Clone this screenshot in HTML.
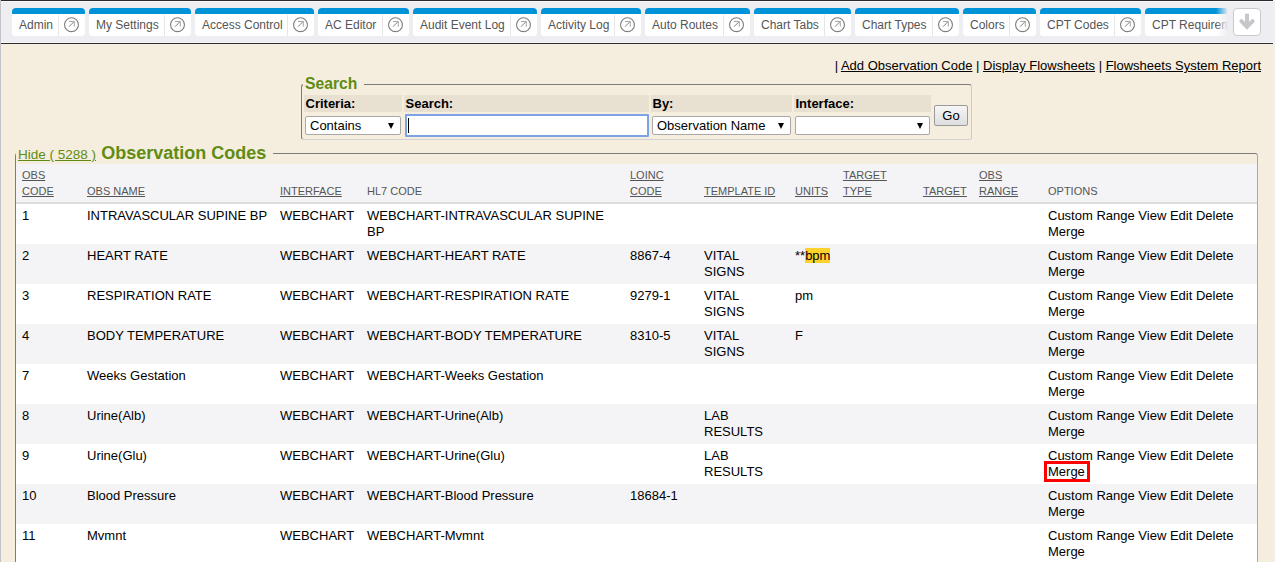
<!DOCTYPE html>
<html><head><meta charset="utf-8">
<style>
*{box-sizing:border-box}
html,body{margin:0;padding:0}
body{width:1275px;height:562px;overflow:hidden;position:relative;background:#f5eddd;font-family:"Liberation Sans",sans-serif;font-size:13px;color:#000}
.lb{position:absolute;left:0;top:0;width:1px;height:562px;background:#c4c4c8;z-index:5}
.rb{position:absolute;left:1273px;top:0;width:2px;height:562px;background:#f0f0f0;z-index:5}
.bar{position:absolute;left:0;top:0;width:1273px;height:44px;background:#ededf2;border-top:1px solid #2a2a2a;border-bottom:1px solid #2e2e2e;overflow:hidden}
.bar .hl{position:absolute;left:0;top:0;width:100%;height:1px;background:#f8f8fa}
.bar .hl2{position:absolute;left:0;top:41px;width:100%;height:1px;background:#f8f8fa}
.tabs{position:absolute;left:12px;top:7px;width:1216px;height:30px;overflow:hidden;display:flex;gap:4px;white-space:nowrap}
.tab{position:relative;flex:none;display:flex;height:28px;background:#fff;border-top:6px solid #0093d7;border-radius:4px 4px 3px 3px}
.tab .t{display:block;padding:0 5px 0 7px;font-size:12px;color:#555;line-height:22px}
.tab .sep{display:block;width:1px;margin-top:1px;background:#e6e6e6}
.tab .ic{display:block;width:26px;height:22px}
.tab svg{display:block}
.fade{position:absolute;left:1216px;top:6px;width:12px;height:31px;background:linear-gradient(to right,rgba(237,237,242,0),#ededf2)}
.fade2{position:absolute;left:1227px;top:6px;width:6px;height:31px;background:#ededf2}
.dbtn{position:absolute;left:1233px;top:7px;width:28px;height:28px;background:#fff;border:1px solid #c9c9cd;border-radius:4px}
.dbtn svg{display:block}
.links{position:absolute;right:14px;top:58px;font-size:13px;line-height:16px;color:#000;white-space:nowrap}
.links u{text-decoration:underline}
.fs{position:absolute;border:1px solid #7c7c7c;border-right-color:#cacaca;border-bottom-color:#d2d2d2;border-radius:3px}
.legend{position:absolute;background:#f5eddd;white-space:nowrap}
.green{color:#608c14}
.hc{position:absolute;background:#e8e1d1;font-weight:bold;font-size:13px;line-height:17px;padding-left:1.5px;height:17px}
.sel{position:absolute;background:#fff;border:1px solid #a9a9a9;border-radius:2px;height:19px;font-size:13px;line-height:17px;padding-left:4px;white-space:nowrap}
.sel .ar{position:absolute;right:6px;top:6px;width:0;height:0;border-left:3px solid transparent;border-right:3px solid transparent;border-top:6px solid #000}
.inp{position:absolute;left:405px;top:114px;width:244px;height:23px;background:#fff;border:2px solid #7da2e6;border-radius:1px}
.inp .caret{position:absolute;left:0.5px;top:2px;width:1px;height:15px;background:#000}
.go{position:absolute;left:934px;top:105px;width:34px;height:21px;border:1px solid #9a9a9a;border-radius:2px;background:linear-gradient(#f6f6f6,#dedede);font-size:13px;line-height:19px;text-align:center}
table.dt{position:absolute;left:16px;top:164px;width:1241px;border-collapse:separate;border-spacing:0;table-layout:fixed}
.dt th{background:#f4f4f6;font-weight:normal;font-size:11px;color:#555;text-align:left;vertical-align:bottom;line-height:16px;padding:3px 0 3px 7px;height:40px;border-bottom:2px solid #dcdcdc}
.dt th u{text-decoration:underline}
.dt td{font-size:13px;line-height:16px;vertical-align:top;padding:4px 0 0 7px;height:40px;color:#000;white-space:nowrap}
.dt td:first-child,.dt th:first-child{padding-left:6px}
.dt tr.o td{background:#f4f4f6}
.dt tr.e td{background:#fff}
.hlt{background:#ffd22e}
.red{position:absolute;left:1044px;top:461px;width:46px;height:21px;border:3px solid #f00}
</style></head><body>
<div class="bar">
  <div class="hl"></div>
  <div class="tabs"><div class="tab"><span class="t" style="width:46px">Admin</span><span class="sep"></span><span class="ic"><svg width="26" height="22" viewBox="0 0 26 22"><circle cx="12.5" cy="10.7" r="6.95" fill="none" stroke="#7e7e7e" stroke-width="1.1"/><path d="M10 12.7 L15 7.7" fill="none" stroke="#808080" stroke-width="1"/><path d="M9.9 7.4 H15.3 V12.7" fill="none" stroke="#a4a4a4" stroke-width="1"/></svg></span></div><div class="tab"><span class="t" style="width:75px">My Settings</span><span class="sep"></span><span class="ic"><svg width="26" height="22" viewBox="0 0 26 22"><circle cx="12.5" cy="10.7" r="6.95" fill="none" stroke="#7e7e7e" stroke-width="1.1"/><path d="M10 12.7 L15 7.7" fill="none" stroke="#808080" stroke-width="1"/><path d="M9.9 7.4 H15.3 V12.7" fill="none" stroke="#a4a4a4" stroke-width="1"/></svg></span></div><div class="tab"><span class="t" style="width:92px">Access Control</span><span class="sep"></span><span class="ic"><svg width="26" height="22" viewBox="0 0 26 22"><circle cx="12.5" cy="10.7" r="6.95" fill="none" stroke="#7e7e7e" stroke-width="1.1"/><path d="M10 12.7 L15 7.7" fill="none" stroke="#808080" stroke-width="1"/><path d="M9.9 7.4 H15.3 V12.7" fill="none" stroke="#a4a4a4" stroke-width="1"/></svg></span></div><div class="tab"><span class="t" style="width:64px">AC Editor</span><span class="sep"></span><span class="ic"><svg width="26" height="22" viewBox="0 0 26 22"><circle cx="12.5" cy="10.7" r="6.95" fill="none" stroke="#7e7e7e" stroke-width="1.1"/><path d="M10 12.7 L15 7.7" fill="none" stroke="#808080" stroke-width="1"/><path d="M9.9 7.4 H15.3 V12.7" fill="none" stroke="#a4a4a4" stroke-width="1"/></svg></span></div><div class="tab"><span class="t" style="width:97px">Audit Event Log</span><span class="sep"></span><span class="ic"><svg width="26" height="22" viewBox="0 0 26 22"><circle cx="12.5" cy="10.7" r="6.95" fill="none" stroke="#7e7e7e" stroke-width="1.1"/><path d="M10 12.7 L15 7.7" fill="none" stroke="#808080" stroke-width="1"/><path d="M9.9 7.4 H15.3 V12.7" fill="none" stroke="#a4a4a4" stroke-width="1"/></svg></span></div><div class="tab"><span class="t" style="width:73px">Activity Log</span><span class="sep"></span><span class="ic"><svg width="26" height="22" viewBox="0 0 26 22"><circle cx="12.5" cy="10.7" r="6.95" fill="none" stroke="#7e7e7e" stroke-width="1.1"/><path d="M10 12.7 L15 7.7" fill="none" stroke="#808080" stroke-width="1"/><path d="M9.9 7.4 H15.3 V12.7" fill="none" stroke="#a4a4a4" stroke-width="1"/></svg></span></div><div class="tab"><span class="t" style="width:78px">Auto Routes</span><span class="sep"></span><span class="ic"><svg width="26" height="22" viewBox="0 0 26 22"><circle cx="12.5" cy="10.7" r="6.95" fill="none" stroke="#7e7e7e" stroke-width="1.1"/><path d="M10 12.7 L15 7.7" fill="none" stroke="#808080" stroke-width="1"/><path d="M9.9 7.4 H15.3 V12.7" fill="none" stroke="#a4a4a4" stroke-width="1"/></svg></span></div><div class="tab"><span class="t" style="width:70px">Chart Tabs</span><span class="sep"></span><span class="ic"><svg width="26" height="22" viewBox="0 0 26 22"><circle cx="12.5" cy="10.7" r="6.95" fill="none" stroke="#7e7e7e" stroke-width="1.1"/><path d="M10 12.7 L15 7.7" fill="none" stroke="#808080" stroke-width="1"/><path d="M9.9 7.4 H15.3 V12.7" fill="none" stroke="#a4a4a4" stroke-width="1"/></svg></span></div><div class="tab"><span class="t" style="width:77px">Chart Types</span><span class="sep"></span><span class="ic"><svg width="26" height="22" viewBox="0 0 26 22"><circle cx="12.5" cy="10.7" r="6.95" fill="none" stroke="#7e7e7e" stroke-width="1.1"/><path d="M10 12.7 L15 7.7" fill="none" stroke="#808080" stroke-width="1"/><path d="M9.9 7.4 H15.3 V12.7" fill="none" stroke="#a4a4a4" stroke-width="1"/></svg></span></div><div class="tab"><span class="t" style="width:46px">Colors</span><span class="sep"></span><span class="ic"><svg width="26" height="22" viewBox="0 0 26 22"><circle cx="12.5" cy="10.7" r="6.95" fill="none" stroke="#7e7e7e" stroke-width="1.1"/><path d="M10 12.7 L15 7.7" fill="none" stroke="#808080" stroke-width="1"/><path d="M9.9 7.4 H15.3 V12.7" fill="none" stroke="#a4a4a4" stroke-width="1"/></svg></span></div><div class="tab"><span class="t" style="width:74px">CPT Codes</span><span class="sep"></span><span class="ic"><svg width="26" height="22" viewBox="0 0 26 22"><circle cx="12.5" cy="10.7" r="6.95" fill="none" stroke="#7e7e7e" stroke-width="1.1"/><path d="M10 12.7 L15 7.7" fill="none" stroke="#808080" stroke-width="1"/><path d="M9.9 7.4 H15.3 V12.7" fill="none" stroke="#a4a4a4" stroke-width="1"/></svg></span></div><div class="tab last"><span class="t">CPT Requirements</span></div></div>
  <div class="hl2"></div>
  <div class="fade"></div><div class="fade2"></div>
  <div class="dbtn"><svg width="26" height="26" viewBox="0 0 26 26"><path d="M13 4.7 V18.5" fill="none" stroke="#c7c7cb" stroke-width="4"/><path d="M7.4 12.2 L13 17.8 L18.6 12.2" fill="none" stroke="#c7c7cb" stroke-width="4" stroke-linecap="round" stroke-linejoin="miter"/></svg></div>
</div>
<div class="lb"></div><div class="rb"></div>

<div class="links">| <u>Add Observation Code</u> | <u>Display Flowsheets</u> | <u>Flowsheets System Report</u></div>

<!-- Search fieldset -->
<div class="fs" style="left:301px;top:84px;width:671px;height:56px"></div>
<div class="legend green" style="left:303px;top:74px;padding:0 7px 0 2px;font-size:15.7px;font-weight:bold;line-height:19px">Search</div>
<div class="hc" style="left:304px;top:95px;width:98px">Criteria:</div>
<div class="hc" style="left:404px;top:95px;width:245px">Search:</div>
<div class="hc" style="left:651px;top:95px;width:141px">By:</div>
<div class="hc" style="left:794px;top:95px;width:137px">Interface:</div>
<div class="sel" style="left:305px;top:116px;width:96px">Contains<span class="ar"></span></div>
<div class="inp"><div class="caret"></div></div>
<div class="sel" style="left:652px;top:116px;width:139px">Observation Name<span class="ar"></span></div>
<div class="sel" style="left:795px;top:116px;width:135px"><span class="ar"></span></div>
<div class="go">Go</div>

<!-- Observation codes fieldset -->
<div class="fs" style="left:15px;top:153px;width:1243px;height:420px;border-right-color:#a8a8a8"></div>
<div class="legend" style="left:16px;top:142px;padding:0 7px 0 2px;line-height:22px"><span class="green" style="font-size:13.5px;text-decoration:underline">Hide ( 5288 )</span> <span class="green" style="font-size:18px;font-weight:bold;margin-left:1.5px">Observation Codes</span></div>

<table class="dt">
<colgroup>
<col style="width:64px"><col style="width:193px"><col style="width:87px"><col style="width:263px"><col style="width:74px"><col style="width:91px"><col style="width:48px"><col style="width:80px"><col style="width:56px"><col style="width:69px"><col>
</colgroup>
<tr><th><u>OBS</u><br><u>CODE</u></th><th><u>OBS NAME</u></th><th><u>INTERFACE</u></th><th>HL7 CODE</th><th><u>LOINC</u><br><u>CODE</u></th><th><u>TEMPLATE ID</u></th><th><u>UNITS</u></th><th><u>TARGET</u><br><u>TYPE</u></th><th><u>TARGET</u></th><th><u>OBS</u><br><u>RANGE</u></th><th>OPTIONS</th></tr>
<tr class="e"><td>1</td><td>INTRAVASCULAR SUPINE BP</td><td>WEBCHART</td><td>WEBCHART-INTRAVASCULAR SUPINE<br>BP</td><td></td><td></td><td></td><td></td><td></td><td></td><td>Custom Range View Edit Delete<br>Merge</td></tr>
<tr class="o"><td>2</td><td>HEART RATE</td><td>WEBCHART</td><td>WEBCHART-HEART RATE</td><td>8867-4</td><td>VITAL<br>SIGNS</td><td>**<span class="hlt">bpm</span></td><td></td><td></td><td></td><td>Custom Range View Edit Delete<br>Merge</td></tr>
<tr class="e"><td>3</td><td>RESPIRATION RATE</td><td>WEBCHART</td><td>WEBCHART-RESPIRATION RATE</td><td>9279-1</td><td>VITAL<br>SIGNS</td><td>pm</td><td></td><td></td><td></td><td>Custom Range View Edit Delete<br>Merge</td></tr>
<tr class="o"><td>4</td><td>BODY TEMPERATURE</td><td>WEBCHART</td><td>WEBCHART-BODY TEMPERATURE</td><td>8310-5</td><td>VITAL<br>SIGNS</td><td>F</td><td></td><td></td><td></td><td>Custom Range View Edit Delete<br>Merge</td></tr>
<tr class="e"><td>7</td><td>Weeks Gestation</td><td>WEBCHART</td><td>WEBCHART-Weeks Gestation</td><td></td><td></td><td></td><td></td><td></td><td></td><td>Custom Range View Edit Delete<br>Merge</td></tr>
<tr class="o"><td>8</td><td>Urine(Alb)</td><td>WEBCHART</td><td>WEBCHART-Urine(Alb)</td><td></td><td>LAB<br>RESULTS</td><td></td><td></td><td></td><td></td><td>Custom Range View Edit Delete<br>Merge</td></tr>
<tr class="e"><td>9</td><td>Urine(Glu)</td><td>WEBCHART</td><td>WEBCHART-Urine(Glu)</td><td></td><td>LAB<br>RESULTS</td><td></td><td></td><td></td><td></td><td>Custom Range View Edit Delete<br>Merge</td></tr>
<tr class="o"><td>10</td><td>Blood Pressure</td><td>WEBCHART</td><td>WEBCHART-Blood Pressure</td><td>18684-1</td><td></td><td></td><td></td><td></td><td></td><td>Custom Range View Edit Delete<br>Merge</td></tr>
<tr class="e"><td>11</td><td>Mvmnt</td><td>WEBCHART</td><td>WEBCHART-Mvmnt</td><td></td><td></td><td></td><td></td><td></td><td></td><td>Custom Range View Edit Delete<br>Merge</td></tr>
</table>
<div class="red"></div>
</body></html>
